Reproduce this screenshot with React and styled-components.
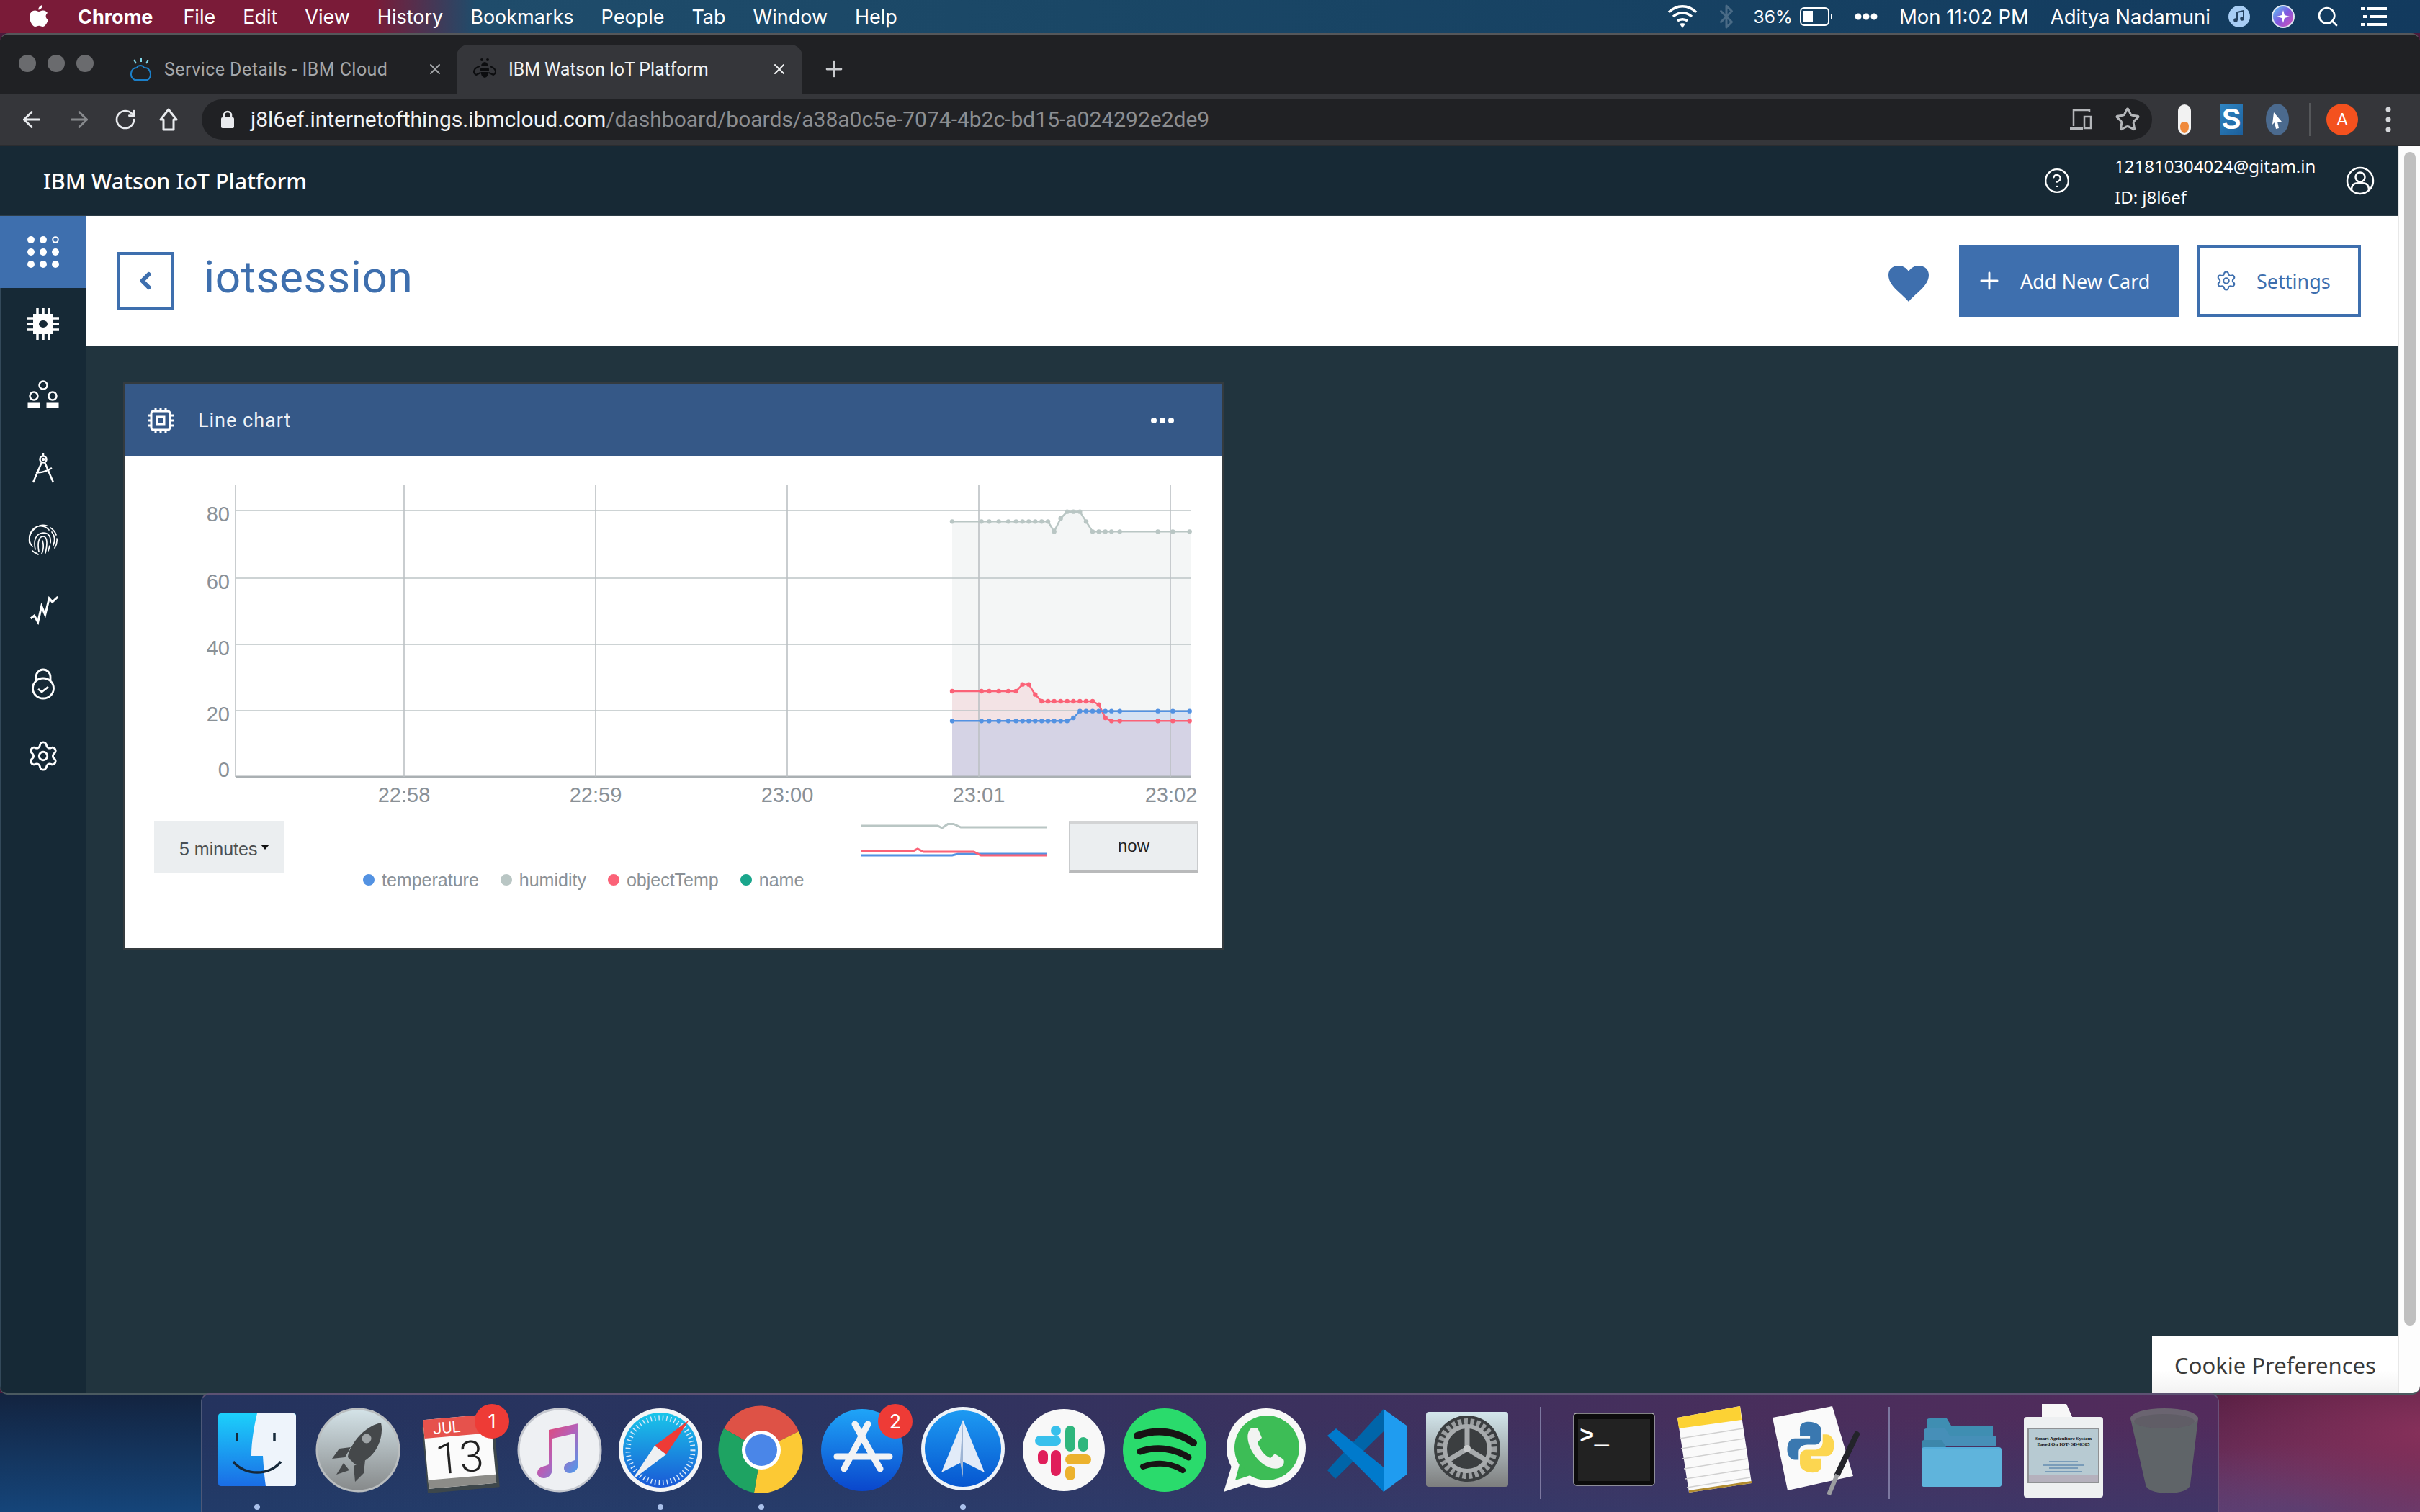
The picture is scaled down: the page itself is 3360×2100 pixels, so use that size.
import React from 'react'
import styled, { createGlobalStyle } from 'styled-components'
import { ArrowLeft, ArrowRight, RotateCw, Star, Plus, Settings, CircleHelp, Bluetooth, Search, X, ChevronLeft } from 'lucide-react'

const GlobalStyle = createGlobalStyle`
  html, body { margin: 0; padding: 0; background: #1d2b45; }
  * { box-sizing: border-box; }
  body { font-family: 'Liberation Sans', Arial, sans-serif; }
`

const Screen = styled.div`
  position: relative;
  width: 3360px;
  height: 2100px;
  overflow: hidden;
  display: flex;
  flex-direction: column;
  background:
    linear-gradient(180deg, #13233f 0, #15457a 100%) 0 1935px / 290px 165px no-repeat,
    radial-gradient(420px 170px at 3370px 1990px, #86305a 0%, transparent 100%),
    radial-gradient(300px 90px at 3200px 2095px, #4f4378 0%, transparent 100%),
    linear-gradient(180deg, #4b1a3c 1935px, #6a3a6c 2100px);
`

const MenuBar = styled.div`
  height: 46px;
  flex: none;
  display: flex;
  align-items: center;
  justify-content: space-between;
  padding: 0 46px 0 41px;
  color: #fff;
  font-family: Inter, sans-serif;
  font-size: 27px;
  background: linear-gradient(90deg, #7a1b38 0, #7a1b38 520px, #1f4c6b 660px, #1a4766 1500px, #123a5e 3360px);
`

const MenuList = styled.div`
  display: flex;
  align-items: center;
  gap: 38px;
`

const MenuTitle = styled.span`
  font-weight: ${p => (p.$bold ? 700 : 400)};
  margin-left: ${p => p.$left || 0}px;
  margin-right: ${p => p.$right || 0}px;
`

const StatusList = styled.div`
  display: flex;
  align-items: center;
  gap: ${p => p.$gap || 30}px;
  font-size: 27.5px;
`

const Percent = styled.span`
  font-size: 24.5px;
`

const Window = styled.div`
  flex: 1;
  display: flex;
  flex-direction: column;
  min-height: 0;
  border-top: 2px solid #55575a;
  border-radius: 12px 12px 10px 10px;
  overflow: hidden;
  background: #202124;
  box-shadow: 0 2px 0 #4b5a60;
`

const TabStrip = styled.div`
  height: 82px;
  flex: none;
  display: flex;
  align-items: flex-end;
  background: #202124;
`

const TrafficLights = styled.div`
  display: flex;
  gap: 16px;
  align-self: center;
  padding-left: 26px;
  width: 166px;
  transform: translateY(-1px);
`

const Light = styled.span`
  width: 24px;
  height: 24px;
  border-radius: 50%;
  background: #6a6b6e;
`

const Tab = styled.div`
  height: 68px;
  display: flex;
  align-items: center;
  width: ${p => p.$width}px;
  padding: 0 ${p => (p.$active ? 20 : 18)}px 0 ${p => (p.$active ? 22 : 14)}px;
  gap: 16px;
  font-family: Roboto, sans-serif;
  font-size: 25px;
  letter-spacing: ${p => (p.$active ? -0.1 : 0.45)}px;
  white-space: nowrap;
  color: ${p => (p.$active ? '#f1f3f4' : '#a4a7aa')};
  background: ${p => (p.$active ? '#35363a' : 'transparent')};
  border-radius: 16px 16px 0 0;
`

const TabLabel = styled.span`
  flex: 1;
`

const NewTab = styled.div`
  display: flex;
  align-items: center;
  height: 68px;
  padding-left: 27px;
  color: #c8cacd;
`

const Toolbar = styled.div`
  height: 73px;
  flex: none;
  display: flex;
  align-items: center;
  background: #35363a;
  color: #e8eaed;
  border-bottom: 2px solid #2c2d30;
`

const NavButtons = styled.div`
  width: 280px;
  flex: none;
  padding-left: 26px;
  display: flex;
  align-items: center;
  gap: 30px;
`

const UrlBar = styled.div`
  width: 2708px;
  height: 56px;
  flex: none;
  display: flex;
  align-items: center;
  background: #202124;
  border-radius: 28px;
  padding: 0 16px 0 26px;
  font-family: Roboto, sans-serif;
  font-size: 30px;
  color: #f1f3f4;
`

const UrlHost = styled.span`
  margin-left: 22px;
`

const UrlPath = styled.span`
  color: #8c8e91;
`

const UrlEnd = styled.div`
  margin-left: auto;
  display: flex;
  align-items: center;
  gap: 31px;
  color: #b4b6b9;
`

const ExtensionTray = styled.div`
  display: flex;
  align-items: center;
`

const TraySlot = styled.span`
  display: flex;
  margin-left: ${p => p.$left}px;
`

const ToolSep = styled.span`
  width: 2px;
  height: 46px;
  background: #55575a;
`

const Avatar = styled.span`
  width: 44px;
  height: 44px;
  border-radius: 50%;
  background: #f4511e;
  color: #fff;
  display: flex;
  align-items: center;
  justify-content: center;
  font-family: Roboto, sans-serif;
  font-size: 24px;
`

const ExtS = styled.span`
  width: 32px;
  height: 44px;
  background: linear-gradient(135deg, #2f86c4, #1c5f9b);
  color: #fff;
  display: flex;
  align-items: center;
  justify-content: center;
  font: 700 40px 'Liberation Sans', sans-serif;
`

const PageFrame = styled.div`
  flex: 1;
  min-height: 0;
  display: flex;
`

const PageBody = styled.div`
  flex: 1;
  min-width: 0;
  display: flex;
  flex-direction: column;
`

const ScrollTrack = styled.div`
  width: 30px;
  flex: none;
  background: #fdfdfd;
  border-left: 1px solid #e8e8e8;
  padding: 8px 6px 94px 7px;
  display: flex;
`

const ScrollThumb = styled.div`
  flex: 1;
  background: #c0c0c0;
  border-radius: 9px;
`

const AppHeader = styled.header`
  height: 97px;
  flex: none;
  display: flex;
  align-items: center;
  padding: 0 33px 0 60px;
  background: #172935;
  border-bottom: 2px solid #2c3c46;
  color: #fff;
`

const AppName = styled.div`
  font-family: 'Noto Sans', sans-serif;
  font-weight: 500;
  font-size: 30.5px;
  flex: 1;
`

const HelpSlot = styled.div`
  width: 99px;
  display: flex;
`

const UserInfo = styled.div`
  width: 321px;
  padding-top: 3px;
  font-family: 'Noto Sans', sans-serif;
  font-size: 24px;
  line-height: 43px;
`

const Workspace = styled.div`
  flex: 1;
  min-height: 0;
  display: flex;
`

const SideNav = styled.nav`
  width: 120px;
  flex: none;
  background: #162936;
  border-left: 2px solid #33495a;
`

const NavItem = styled.div`
  height: 100px;
  display: flex;
  align-items: center;
  justify-content: center;
  margin-left: -2px;
  background: ${p => (p.$active ? '#3e6fae' : 'transparent')};
  color: #fff;
`

const Main = styled.main`
  flex: 1;
  min-width: 0;
  background: #21343e;
  display: flex;
  flex-direction: column;
`

const PageHead = styled.div`
  height: 180px;
  flex: none;
  background: #fff;
  display: flex;
  align-items: center;
  padding: 0 52px 0 42px;
`

const BackButton = styled.div`
  width: 80px;
  height: 80px;
  border: 4px solid #3e6fae;
  color: #3e6fae;
  display: flex;
  align-items: center;
  justify-content: center;
`

const PageTitle = styled.h1`
  margin: -12px 0 0 41px;
  flex: 1;
  font-family: Roboto, sans-serif;
  font-weight: 400;
  font-size: 62px;
  letter-spacing: 0.6px;
  color: #3e6fae;
`

const HeartSlot = styled.div`
  display: flex;
  margin-right: 42px;
  margin-top: 8px;
`

const PrimaryButton = styled.div`
  width: 306px;
  height: 100px;
  background: #3e6fae;
  color: #fff;
  display: flex;
  align-items: center;
  gap: 24px;
  padding-left: 23px;
  font-family: 'Noto Sans', sans-serif;
  font-size: 27px;
`

const GhostButton = styled.div`
  width: 228px;
  height: 100px;
  margin-left: 24px;
  border: 4px solid #3e6fae;
  color: #3e6fae;
  display: flex;
  align-items: center;
  gap: 27px;
  padding-left: 22px;
  font-family: 'Noto Sans', sans-serif;
  font-size: 27px;
`

const Canvas = styled.div`
  flex: 1;
  padding: 54px;
  position: relative;
`

const Card = styled.section`
  width: 1522px;
  height: 782px;
  background: #fff;
  box-shadow: 0 0 0 3px #343b3f;
`

const CardHead = styled.div`
  height: 99px;
  display: flex;
  align-items: center;
  padding: 0 66px 0 30px;
  background: #355887;
  color: #eef2f7;
  font-family: Roboto, sans-serif;
  font-size: 27px;
  letter-spacing: 1px;
`

const CardTitle = styled.span`
  margin-left: 33px;
  flex: 1;
`

const MoreDots = styled.div`
  display: flex;
  gap: 4px;
`

const MoreDot = styled.span`
  width: 8px;
  height: 8px;
  border-radius: 50%;
  background: #fff;
`

const ChartSvg = styled.svg`
  display: block;
`

const AxisText = styled.text`
  font-family: 'Liberation Sans', sans-serif;
  font-size: 29px;
  fill: #8a9197;
`

const Controls = styled.div`
  height: 72px;
  display: flex;
  align-items: center;
  padding: 0 32px 0 40px;
`

const RangeButton = styled.div`
  width: 180px;
  height: 72px;
  background: #ebeef0;
  color: #4a4f53;
  display: flex;
  align-items: center;
  padding: 7px 0 0 35px;
  gap: 5px;
  font-size: 25px;
  white-space: nowrap;
`

const Caret = styled.span`
  width: 0;
  height: 0;
  border: 6px solid transparent;
  border-top: 7px solid #111;
  border-bottom: 0;
  margin-top: -6px;
`

const NowButton = styled.div`
  width: 180px;
  height: 72px;
  margin-left: 30px;
  background: #ebeef0;
  border: 2px solid #c9cbcd;
  border-top: 4px solid #d3d4d5;
  border-bottom: 4px solid #b9babb;
  color: #222;
  display: flex;
  align-items: center;
  justify-content: center;
  font-size: 24px;
  padding-bottom: 2px;
`

const MiniChart = styled.svg`
  margin-left: auto;
  align-self: flex-start;
  margin-top: 3px;
`

const Legend = styled.div`
  display: flex;
  align-items: center;
  height: 20px;
  padding-left: 330px;
  gap: 30px;
`

const LegendItem = styled.div`
  display: flex;
  align-items: center;
  gap: 10px;
  font-size: 25px;
  color: #8a9197;
  white-space: nowrap;
`

const LegendDot = styled.span`
  width: 16px;
  height: 16px;
  border-radius: 50%;
  background: ${p => p.$color};
`

const CookieTab = styled.div`
  position: absolute;
  right: 0;
  bottom: 0;
  width: 342px;
  height: 79px;
  background: linear-gradient(180deg, #ffffff 60%, #f2f2f2);
  color: #3a3a3a;
  display: flex;
  align-items: center;
  justify-content: center;
  font-family: 'Noto Sans', sans-serif;
  font-size: 31px;
`

const Dock = styled.div`
  position: relative;
  height: 165px;
  flex: none;
  margin: 0 279px;
  padding: 0 7px;
  display: flex;
  background:
    linear-gradient(180deg, rgba(30, 70, 120, 0) 20%, rgba(30, 75, 125, 0.35) 100%),
    linear-gradient(90deg, #24335e 0, #2b3460 30%, #3c315e 55%, #4a2e5c 80%, #532b5c 100%);
  border-top: 2px solid #5d5273;
  border-left: 1px solid #4d5878;
  border-right: 1px solid #6a5078;
  border-radius: 12px 12px 0 0;
`

const DockItem = styled.div`
  position: relative;
  width: 140px;
  flex: none;
  padding-top: 17px;
  display: flex;
  justify-content: center;
`

const DockDivider = styled.div`
  width: 64px;
  flex: none;
  display: flex;
  justify-content: center;
  padding: 17px 0 18px;
`

const DockLine = styled.span`
  width: 2px;
  background: #7c78a0;
`

const RunDot = styled.span`
  position: absolute;
  left: 50%;
  bottom: 3px;
  margin-left: -4px;
  width: 8px;
  height: 8px;
  border-radius: 50%;
  background: #a9c0ea;
`

const Badge = styled.span`
  position: absolute;
  right: 0;
  top: 13px;
  width: 48px;
  height: 48px;
  border-radius: 50%;
  background: #ee3b36;
  color: #fff;
  display: flex;
  align-items: center;
  justify-content: center;
  font-family: Inter, sans-serif;
  font-size: 27px;
`

const DockSvg = styled.svg`
  display: block;
  overflow: visible;
`

const IconText = styled.text`
  font-family: ${p => p.$font || 'Roboto, sans-serif'};
`

/* ---------- small drawn icons ---------- */

const AppleLogo = () => (
  <svg width="26" height="32" viewBox="0 0 26 32" fill="#fff">
    <path d="M18 0c.3 3-2.500 6.600-5.600 6.400C12 3.500 15 .3 18 0zM25 11c-3.500 2.200-3 7.500 1 9.500-1 3-4 9.500-7.500 9.500-2 0-3-1.300-5.300-1.300S10 30 8 30C4 30 0 22 0 16.500 0 10.500 4 7.500 7.500 7.500c2.300 0 4 1.500 5.500 1.500s3.500-1.700 6-1.500c2.500.2 4.800 1.300 6 3.500z" />
  </svg>
)

const WifiIcon = () => (
  <svg width="42" height="36" viewBox="0 0 42 36" fill="none" stroke="#fff" strokeWidth="3.500">
    <path d="M2 12c11-11 27-11 38 0M8 18c8-7 18-7 26 0M14 24c4-3 10-3 14 0" />
    <path d="M21 34l-4-6c2-1 6-1 8 0z" fill="#fff" stroke="none" />
  </svg>
)

const BatteryIcon = () => (
  <svg width="46" height="26" viewBox="0 0 46 26">
    <rect x="1" y="1" width="39" height="24" rx="5" fill="none" stroke="#fff" strokeWidth="2" />
    <rect x="5" y="5" width="13" height="16" fill="#fff" />
    <path d="M43 9c2 1 2 7 0 8z" fill="#fff" />
  </svg>
)

const StatusDots = () => (
  <svg width="32" height="10" viewBox="0 0 32 10" fill="#fff">
    <circle cx="5" cy="5" r="4.500" />
    <circle cx="16" cy="5" r="4.500" />
    <circle cx="27" cy="5" r="4.500" />
  </svg>
)

const MusicBadge = () => (
  <svg width="30" height="30" viewBox="0 0 30 30">
    <circle cx="15" cy="15" r="15" fill="#a8cdf4" />
    <path d="M12 20V9l9-2v11" fill="none" stroke="#24415f" strokeWidth="2" />
    <circle cx="10" cy="20" r="2.800" fill="#24415f" />
    <circle cx="19" cy="18" r="2.800" fill="#24415f" />
  </svg>
)

const SiriIcon = () => (
  <svg width="32" height="32" viewBox="0 0 32 32">
    <defs>
      <linearGradient id="siriG" x1="0" y1="0" x2="1" y2="1">
        <stop offset="0" stopColor="#5ad0f5" />
        <stop offset="0.5" stopColor="#7f58e0" />
        <stop offset="1" stopColor="#e04fb0" />
      </linearGradient>
    </defs>
    <circle cx="16" cy="16" r="15" fill="url(#siriG)" stroke="#dfe8f2" strokeWidth="2" />
    <path d="M16 7l2 7 7 2-7 2-2 7-2-7-7-2 7-2z" fill="#fff" />
  </svg>
)

const ListIcon = () => (
  <svg width="36" height="26" viewBox="0 0 36 26" fill="#fff">
    <rect x="0" y="0" width="5" height="4" />
    <rect x="9" y="0" width="27" height="4" />
    <rect x="3" y="11" width="5" height="4" />
    <rect x="12" y="11" width="24" height="4" />
    <rect x="0" y="22" width="5" height="4" />
    <rect x="9" y="22" width="27" height="4" />
  </svg>
)

const CloudFavicon = () => (
  <svg width="32" height="36" viewBox="0 0 32 36" fill="none" strokeWidth="2">
    <path d="M16 2v6M6 5l3 5M26 5l-3 5" stroke="#7fd6e8" />
    <path d="M7 33c-8-4-6-17 3-17 2-4 8-4 10 0 9-1 12 12 5 17z" stroke="#1b7fc8" />
  </svg>
)

const BeeFavicon = () => (
  <svg width="34" height="32" viewBox="0 0 34 32" fill="none">
    <ellipse cx="17" cy="17" rx="6" ry="11" fill="#0c0d0f" />
    <path d="M10 12c-9 3-10 9-5 12l6-3M24 12c9 3 10 9 5 12l-6-3" stroke="#0c0d0f" strokeWidth="2" />
    <circle cx="13" cy="3" r="2" fill="#0c0d0f" />
    <circle cx="21" cy="3" r="2" fill="#0c0d0f" />
    <path d="M10 13h14M10 19h14" stroke="#35363a" strokeWidth="2" />
  </svg>
)

const HomeIcon = () => (
  <svg width="28" height="34" viewBox="0 0 28 34" fill="none" stroke="#e8eaed" strokeWidth="3">
    <path d="M14 3L3 17h4v14h14V17h4z" strokeLinejoin="round" />
  </svg>
)

const LockIcon = () => (
  <svg width="20" height="26" viewBox="0 0 20 26">
    <path d="M5 11V7a5 5 0 0110 0v4" fill="none" stroke="#e8eaed" strokeWidth="2.500" />
    <rect x="1" y="10" width="18" height="15" rx="2" fill="#e8eaed" />
  </svg>
)

const DevicesIcon = () => (
  <svg width="32" height="30" viewBox="0 0 32 30" fill="none" stroke="#b4b6b9" strokeWidth="2.500">
    <path d="M28 4V2H6v22" />
    <path d="M1 27h18" strokeWidth="4" />
    <rect x="21" y="11" width="9" height="16" />
  </svg>
)

const PillExtension = () => (
  <svg width="20" height="44" viewBox="0 0 20 44">
    <rect x="1" y="1" width="18" height="42" rx="9" fill="#f2f2f2" />
    <path d="M4 24a6 9 0 0012 0c0-6-3-7-6-7s-6 1-6 7z" fill="#f08a3c" transform="translate(0 8)" />
  </svg>
)

const CursorExtension = () => (
  <svg width="32" height="44" viewBox="0 0 32 44">
    <ellipse cx="16" cy="22" rx="16" ry="22" fill="#4b6a8e" />
    <path d="M11 12l11 13h-6l2 9-4 1-2-9-3 3z" fill="#fff" />
  </svg>
)

const KebabIcon = () => (
  <svg width="8" height="36" viewBox="0 0 8 36" fill="#d5d7da">
    <circle cx="4" cy="4" r="3.500" />
    <circle cx="4" cy="18" r="3.500" />
    <circle cx="4" cy="32" r="3.500" />
  </svg>
)

const UserIcon = () => (
  <svg width="40" height="40" viewBox="0 0 40 40" fill="none" stroke="#fff" strokeWidth="2.500">
    <circle cx="20" cy="20" r="18" />
    <circle cx="20" cy="15" r="6.500" />
    <path d="M8 33c0-9 5-10 12-10s12 1 12 10" />
  </svg>
)

const HeartIcon = () => (
  <svg width="56" height="50" viewBox="0 0 56 50" fill="#3e6fae">
    <path d="M28 50C18 38 0 28 0 13 0 5 6 0 14 0c6 0 11 3 14 8 3-5 8-8 14-8 8 0 14 5 14 13 0 15-18 25-28 37z" />
  </svg>
)

const GridNav = () => (
  <svg width="44" height="44" viewBox="0 0 44 44" fill="#fff">
    {[5, 22, 39].map(y =>
      [5, 22, 39].map(x =>
        x === 39 && y === 5 ? (
          <circle key={x + '-' + y} cx={x} cy={y} r="3.800" fill="none" stroke="#fff" strokeWidth="2" />
        ) : (
          <circle key={x + '-' + y} cx={x} cy={y} r="5" />
        )
      )
    )}
  </svg>
)

const ChipNav = () => (
  <svg width="44" height="44" viewBox="0 0 44 44">
    <rect x="8" y="8" width="28" height="28" fill="#fff" />
    <path d="M14 0v44M22 0v44M30 0v44M0 14h44M0 22h44M0 30h44" stroke="#fff" strokeWidth="3.500" />
    <path d="M0 18h8M0 26h8M36 18h8M36 26h8M18 0v8M26 0v8M18 36v8M26 36v8" stroke="#162936" strokeWidth="3" />
    <ellipse cx="22" cy="22" rx="6" ry="5" fill="#162936" />
  </svg>
)

const GroupNav = () => (
  <svg width="44" height="44" viewBox="0 0 44 44" fill="none" stroke="#fff" strokeWidth="2.500">
    <circle cx="22" cy="7" r="5.500" />
    <circle cx="9" cy="22" r="5.500" />
    <circle cx="35" cy="22" r="5.500" />
    <rect x="1" y="32" width="16" height="6" fill="#fff" strokeWidth="1" />
    <rect x="27" y="32" width="16" height="6" fill="#fff" strokeWidth="1" />
  </svg>
)

const CompassNav = () => (
  <svg width="44" height="44" viewBox="0 0 44 44" fill="none" stroke="#fff" strokeWidth="2.500">
    <circle cx="22" cy="10" r="4.500" />
    <path d="M22 1v4M20 14L8 42M24 14l12 28M12 28c8 1 14-1 22-6" />
    <circle cx="22" cy="10" r="1" fill="#fff" />
  </svg>
)

const FingerprintNav = () => (
  <svg width="44" height="44" viewBox="0 0 44 44" fill="none" stroke="#fff" strokeWidth="1.700" strokeLinecap="round">
    <path d="M3 26A19 20 0 0 1 12 5M17 2A20 20 0 0 1 27 2M32 5A19 20 0 0 1 40 15M41 20A20 20 0 0 1 38 33" />
    <path d="M7 31A15 16 0 0 1 30 8M34 11A15 16 0 0 1 36 29" />
    <path d="M11 35C8 22 12 13 22 12 30 12 33 18 32 26M31 30L29 37" />
    <path d="M16 38C14 28 15 17 22 17 28 17 28 28 25 40" />
    <path d="M21 23C23 29 22 36 20 41" />
    <path d="M7 37L11 40M12 40L15 42" />
  </svg>
)

const TrendNav = () => (
  <svg width="44" height="44" viewBox="0 0 44 44" fill="none" stroke="#fff" strokeWidth="3">
    <path d="M4.700 31L9.700 27 14.700 36 19.700 14 24.700 26 30.300 3 34.700 8 42.300 1" />
  </svg>
)

const LockNav = () => (
  <svg width="44" height="44" viewBox="0 0 44 44" fill="none" stroke="#fff" strokeWidth="2.800">
    <path d="M12 17v-5a10 10 0 0120 0v5" />
    <ellipse cx="22" cy="28" rx="14.500" ry="14" />
    <path d="M15 29l5 4 9-7" />
  </svg>
)

const ChipCard = () => (
  <svg width="38" height="38" viewBox="0 0 38 38" fill="none" stroke="#fff">
    <rect x="6" y="6" width="26" height="26" rx="3" strokeWidth="3" />
    <rect x="14" y="14" width="10" height="10" strokeWidth="3" />
    <path d="M12 1v5M19 1v5M26 1v5M12 32v5M19 32v5M26 32v5M1 12h5M1 19h5M1 26h5M32 12h5M32 19h5M32 26h5" strokeWidth="3" />
  </svg>
)

/* ---------- chart ---------- */

const px = zx => 1280 + zx / 3
const py = zy => 660 + zy / 3

const humidity = [[126,193],[248,193],[280,193],[320,193],[360,193],[392,193],[419,193],[445,193],[472,193],[499,193],[525,193],[551,235],[578,180],[605,152],[631,152],[658,152],[684,193],[711,235],[737,235],[764,235],[790,235],[824,235],[983,235],[1045,235],[1115,235]]
const objectTemp = [[126,900],[248,900],[280,900],[320,900],[360,900],[392,900],[419,872],[445,872],[472,914],[499,942],[525,942],[551,942],[578,942],[605,942],[631,942],[658,942],[684,942],[711,942],[737,956],[764,1011],[790,1024],[824,1024],[983,1024],[1045,1024],[1115,1024]]
const temperature = [[126,1024],[248,1024],[280,1024],[320,1024],[360,1024],[392,1024],[419,1024],[445,1024],[472,1024],[499,1024],[525,1024],[551,1024],[578,1024],[605,1024],[631,1011],[658,983],[684,983],[711,983],[737,983],[764,983],[790,983],[824,983],[983,983],[1045,983],[1115,983]]

const series = [
  { name: 'humidity', color: '#b9c6c4', fill: 'rgba(185,198,196,0.16)', data: humidity },
  { name: 'objectTemp', color: '#fb6277', fill: 'rgba(240,130,140,0.16)', data: objectTemp },
  { name: 'temperature', color: '#5392e2', fill: 'rgba(83,146,226,0.19)', data: temperature },
]

const gridY = [[709, '80'], [803, '60'], [895, '40'], [987, '20'], [1079, '0']]
const gridX = [[561, '22:58'], [827, '22:59'], [1093, '23:00'], [1359, '23:01'], [1625, '23:02']]

const points = d => d.map(([x, y]) => `${px(x)},${py(y)}`).join(' ')

const LineChart = () => (
  <ChartSvg width="1522" height="507" viewBox="174 633 1522 507">
    {series.map(s => (
      <polygon key={s.name} fill={s.fill} points={`${points(s.data)} ${px(1122)},${py(s.data[s.data.length - 1][1])} ${px(1122)},1079 ${px(126)},1079`} />
    ))}
    {gridY.map(([y, label]) => (
      <g key={label}>
        <line x1="327" x2="1654" y1={y} y2={y} stroke={label === '0' ? '#aab0b3' : '#bcc4c6'} strokeWidth={label === '0' ? 3 : 1.600} />
        <AxisText x="319" y={label === '0' ? y : y + 15} textAnchor="end">{label}</AxisText>
      </g>
    ))}
    <line x1="327" x2="327" y1="674" y2="1079" stroke="#bcc1c4" strokeWidth="1.600" />
    {gridX.map(([x, label]) => (
      <g key={label}>
        <line x1={x} x2={x} y1="674" y2="1079" stroke="#bcc1c4" strokeWidth="1.600" />
        <AxisText x={label === '23:02' ? x + 1 : x} y="1114" textAnchor="middle">{label}</AxisText>
      </g>
    ))}
    {series.map(s => (
      <g key={s.name}>
        <polyline fill="none" stroke={s.color} strokeWidth="2.500" points={points(s.data)} />
        {s.data.map(([x, y]) => (
          <circle key={x} cx={px(x)} cy={py(y)} r="3.200" fill={s.color} />
        ))}
      </g>
    ))}
  </ChartSvg>
)

const Overview = () => (
  <MiniChart width="258" height="48" viewBox="0 0 258 48">
    <path d="M0 4H106L112 7L120 1.500H128L138 6H258" fill="none" stroke="#b9c6c4" strokeWidth="3" />
    <path d="M0 45H126L134 43H258" fill="none" stroke="#5392e2" strokeWidth="3" />
    <path d="M0 39H72L78 36L86 40H156L166 45H258" fill="none" stroke="#fb6277" strokeWidth="3" />
  </MiniChart>
)

/* ---------- dock icons, each on a 120 box ---------- */

const FinderIcon = () => (
  <DockSvg width="120" height="120" viewBox="0 0 120 120">
    <defs>
      <linearGradient id="finderL" x1="0" y1="0" x2="0" y2="1">
        <stop offset="0" stopColor="#1cd0fb" />
        <stop offset="1" stopColor="#1a6de6" />
      </linearGradient>
    </defs>
    <rect x="6" y="9" width="108" height="101" rx="4" fill="url(#finderL)" />
    <path d="M60 9H110a4 4 0 014 4v93a4 4 0 01-4 4H72C70 96 69 84 68 68H52C52 48 56 26 60 9z" fill="#eef4fb" />
    <path d="M32 36v12M84 36v12" stroke="#16293a" strokeWidth="3.500" />
    <path d="M27 76C42 96 78 96 93 76" fill="none" stroke="#16293a" strokeWidth="3.500" />
  </DockSvg>
)

const LaunchpadIcon = () => (
  <DockSvg width="120" height="120" viewBox="0 0 120 120">
    <defs>
      <linearGradient id="lpG" x1="0" y1="0" x2="0" y2="1">
        <stop offset="0" stopColor="#d4e3e8" />
        <stop offset="1" stopColor="#86898a" />
      </linearGradient>
    </defs>
    <circle cx="60" cy="60" r="57" fill="url(#lpG)" stroke="#b9bdbf" strokeWidth="3" />
    <g fill="#45484a">
      <path d="M92 22C78 25 62 36 52 54c-4 6-6 12-6 16l10 10c4 0 10-3 16-7C88 62 96 40 92 22z" />
      <path d="M50 56L34 58 24 72l18-2zM70 74l-2 18-12 12-2-22zM40 78l-10 16 18-6z" />
    </g>
    <circle cx="72" cy="44" r="6.500" fill="#9fa4a6" />
  </DockSvg>
)

const CalendarIcon = () => (
  <DockSvg width="120" height="120" viewBox="0 0 120 120">
    <g transform="rotate(-5 60 60)">
      <rect x="12" y="24" width="100" height="92" fill="#3d474b" />
      <rect x="14" y="14" width="94" height="96" fill="#fbfbfb" />
      <rect x="14" y="98" width="94" height="12" fill="#8c8c88" />
      <rect x="14" y="14" width="94" height="26" fill="#e6524c" />
      <IconText x="46" y="35" textAnchor="middle" fontSize="22" fill="#fff">JUL</IconText>
      <IconText x="60" y="91" textAnchor="middle" fontSize="60" fontWeight="300" fill="#222">13</IconText>
    </g>
  </DockSvg>
)

const MusicIcon = () => (
  <DockSvg width="120" height="120" viewBox="0 0 120 120">
    <defs>
      <linearGradient id="noteG" x1="0" y1="0" x2="1" y2="1">
        <stop offset="0" stopColor="#f4405e" />
        <stop offset="0.5" stopColor="#b660b8" />
        <stop offset="1" stopColor="#3ea4f4" />
      </linearGradient>
    </defs>
    <circle cx="60" cy="60" r="57" fill="#eef0f3" stroke="#c5c8cf" strokeWidth="3" />
    <path fill="url(#noteG)" d="M45 32l41-9v56c0 8-6 13-12 13-5 0-8-3-8-7 0-6 5-8 10-9l5-2V37L50 44v42c0 8-6 13-12 13-5 0-9-3-9-7 0-6 5-9 11-10l5-2z" />
  </DockSvg>
)

const SafariIcon = () => (
  <DockSvg width="120" height="120" viewBox="0 0 120 120">
    <defs>
      <linearGradient id="safG" x1="0" y1="0" x2="0" y2="1">
        <stop offset="0" stopColor="#1ac6ea" />
        <stop offset="1" stopColor="#1a58d6" />
      </linearGradient>
    </defs>
    <circle cx="60" cy="60" r="58" fill="#f4f5f6" />
    <circle cx="60" cy="60" r="52" fill="url(#safG)" />
    <circle cx="60" cy="60" r="45" fill="none" stroke="#d8e8f8" strokeWidth="7" strokeDasharray="1.500 4" />
    <path d="M100 18L68 66 52 54z" fill="#ee3b36" />
    <path d="M20 102L52 54 68 66z" fill="#eef0f2" />
  </DockSvg>
)

const ChromeIcon = () => (
  <DockSvg width="120" height="120" viewBox="0 0 120 120">
    <path d="M60 60L112 34A58 60 0 008 30z" fill="#de5246" />
    <path d="M60 60L112 34A58 60 0 0150 119z" fill="#fcc934" />
    <path d="M60 60L50 119A58 60 0 018 30z" fill="#1ea362" />
    <circle cx="60" cy="60" r="27" fill="#fff" />
    <circle cx="60" cy="60" r="22" fill="#4a86e8" />
  </DockSvg>
)

const AppStoreIcon = () => (
  <DockSvg width="120" height="120" viewBox="0 0 120 120">
    <defs>
      <linearGradient id="asG" x1="0" y1="0" x2="0" y2="1">
        <stop offset="0" stopColor="#1fa5f8" />
        <stop offset="1" stopColor="#0a46cc" />
      </linearGradient>
    </defs>
    <circle cx="60" cy="60" r="57" fill="url(#asG)" />
    <path d="M50 24l35 62M68 24L35 86M25 69h73" stroke="#f1f3f5" strokeWidth="9" strokeLinecap="round" fill="none" />
  </DockSvg>
)

const SparkIcon = () => (
  <DockSvg width="120" height="120" viewBox="0 0 120 120">
    <defs>
      <linearGradient id="spG" x1="0" y1="0" x2="0" y2="1">
        <stop offset="0" stopColor="#1d9af2" />
        <stop offset="1" stopColor="#0656d0" />
      </linearGradient>
    </defs>
    <circle cx="60" cy="58" r="58" fill="#eef3f8" />
    <circle cx="60" cy="58" r="53" fill="url(#spG)" />
    <path d="M60 18L90 91 60 76 30 91z" fill="#e2ebf8" />
    <path d="M60 18V98L56 76z" fill="#9db4d4" />
  </DockSvg>
)

const SlackIcon = () => (
  <DockSvg width="120" height="120" viewBox="0 0 120 120">
    <circle cx="60" cy="60" r="57" fill="#f8f8f8" />
    <rect x="20" y="40" width="36" height="14" rx="7" fill="#38c0ec" />
    <rect x="42" y="26" width="14" height="14" rx="7" fill="#38c0ec" />
    <rect x="62" y="26" width="14" height="36" rx="7" fill="#2eb67d" />
    <rect x="80" y="42" width="14" height="20" rx="7" fill="#2eb67d" />
    <rect x="62" y="66" width="36" height="14" rx="7" fill="#ecb22e" />
    <rect x="62" y="82" width="14" height="20" rx="7" fill="#ecb22e" />
    <rect x="42" y="60" width="14" height="36" rx="7" fill="#e01e5a" />
    <rect x="24" y="60" width="14" height="20" rx="7" fill="#e01e5a" />
  </DockSvg>
)

const SpotifyIcon = () => (
  <DockSvg width="120" height="120" viewBox="0 0 120 120">
    <circle cx="60" cy="60" r="58" fill="#2adb6c" />
    <path d="M22 40C50 30 78 34 100 50" fill="none" stroke="#171414" strokeWidth="10" strokeLinecap="round" />
    <path d="M26 62C50 54 74 58 93 70" fill="none" stroke="#171414" strokeWidth="9" strokeLinecap="round" />
    <path d="M30 83C50 76 70 78 85 88" fill="none" stroke="#171414" strokeWidth="8" strokeLinecap="round" />
  </DockSvg>
)

const WhatsAppIcon = () => (
  <DockSvg width="120" height="120" viewBox="0 0 120 120">
    <circle cx="61" cy="57" r="55" fill="#f7f8f7" />
    <path d="M13 82L2 118l36-12z" fill="#f7f8f7" />
    <circle cx="62" cy="57" r="45" fill="#3dbd56" />
    <path d="M24 80L18 102l24-8z" fill="#3dbd56" />
    <path d="M36 30c-6 4-8 14-2 28 8 18 26 32 40 28 6-2 8-8 6-12L68 66l-6 6c-8-2-16-14-18-22l6-6-6-14z" fill="#f2f3f2" transform="translate(5 -1)" />
  </DockSvg>
)

const VsCodeIcon = () => (
  <DockSvg width="120" height="120" viewBox="0 0 120 120">
    <path d="M84 3V34L17 100 6 88z" fill="#0065a9" />
    <path d="M6 40L18 30 84 84V118z" fill="#007acc" />
    <path d="M84 3L116 26V94L84 118z" fill="#1f9cf0" />
  </DockSvg>
)

const SystemPrefsIcon = () => (
  <DockSvg width="120" height="120" viewBox="0 0 120 120">
    <defs>
      <linearGradient id="prefG" x1="0" y1="0" x2="0" y2="1">
        <stop offset="0" stopColor="#d3e6ec" />
        <stop offset="1" stopColor="#7d7e7e" />
      </linearGradient>
    </defs>
    <rect x="3" y="7" width="114" height="104" rx="4" fill="url(#prefG)" />
    <circle cx="60" cy="58" r="46" fill="#3b3e40" />
    <circle cx="60" cy="58" r="37" fill="none" stroke="#9a9d9f" strokeWidth="10" strokeDasharray="5 3.500" />
    <circle cx="60" cy="58" r="31" fill="none" stroke="#a7aaac" strokeWidth="6" />
    <path d="M60 58V28M60 58L34 74M60 58l26 16" stroke="#a7aaac" strokeWidth="7" />
    <circle cx="60" cy="58" r="5" fill="#c7c9ca" />
  </DockSvg>
)

const TerminalIcon = () => (
  <DockSvg width="120" height="120" viewBox="0 0 120 120">
    <rect x="4" y="9" width="112" height="100" rx="4" fill="#0c0c0c" stroke="#a9aaab" strokeWidth="1.500" />
    <rect x="10" y="17" width="100" height="86" fill="#222" />
    <IconText x="12" y="50" fontSize="34" fill="#fff" $font="'Liberation Mono', monospace" fontWeight="700">&gt;_</IconText>
  </DockSvg>
)

const NotesIcon = () => (
  <DockSvg width="120" height="120" viewBox="0 0 120 120">
    <path d="M8 15L95 -1 111 106 24 119z" fill="#fafafa" />
    <path d="M24 119L111 106 111 103 24 116z" fill="#b08a2e" />
    <path d="M8 15L95 -1 97 18 10 30z" fill="#fcd234" />
    <path d="M11 44l88-14M13 58l88-14M15 72l88-14M17 86l88-14M19 100l88-14M21 112l88-14" stroke="#d0d0d0" strokeWidth="1.500" />
  </DockSvg>
)

const PythonIcon = () => (
  <DockSvg width="120" height="120" viewBox="0 0 120 120">
    <path d="M0 15L83 -1 112 96 21 116z" fill="#fafafa" />
    <g transform="translate(4.600 1.400) scale(0.88)">
      <path d="M52 22c-14 0-14 8-14 14v8h16v4H30c-8 0-12 8-12 18s6 16 12 16h6V70c0-8 6-12 14-12h12c6 0 10-6 10-10V36c0-8-8-14-20-14z" fill="#3a78b0" />
      <path d="M58 102c14 0 14-8 14-14v-8H56v-4h24c8 0 12-8 12-18S86 42 80 42h-6v12c0 8-6 12-14 12H48c-6 0-10 6-10 10v12c0 8 8 14 20 14z" fill="#fcd650" />
    </g>
    <path d="M117 38L90 94" stroke="#23242a" strokeWidth="8" strokeLinecap="round" />
    <path d="M90 94L78 122" stroke="#9b9da0" strokeWidth="6" />
  </DockSvg>
)

const FolderIcon = () => (
  <DockSvg width="120" height="120" viewBox="0 0 120 120">
    <path d="M10 20a4 4 0 014-4h24l6 10h58v14H10z" fill="#3f8eb2" />
    <path d="M6 34a4 4 0 014-4h26l6 10h64v14H6z" fill="#468fb8" />
    <path d="M3 50a4 4 0 014-4h24l6 10h74v20H3z" fill="#3c87ab" />
    <rect x="3" y="56" width="111" height="55" rx="4" fill="#55afdc" />
    <rect x="3" y="58" width="111" height="53" rx="4" fill="#5fb4dc" />
  </DockSvg>
)

const DocumentIcon = () => (
  <DockSvg width="120" height="120" viewBox="0 0 120 120">
    <path d="M30 -4H64L74 18H30z" fill="#f7f7f7" />
    <rect x="5" y="14" width="110" height="112" rx="4" fill="#eef0f1" />
    <rect x="11" y="30" width="98" height="75" fill="#b7cad2" stroke="#8f9194" strokeWidth="2" />
    <rect x="12" y="94" width="96" height="10" fill="#b5b1bd" />
    <IconText x="60" y="46" textAnchor="middle" fontSize="7" fontWeight="700" fill="#111" $font="'Liberation Serif', serif">Smart Agriculture System</IconText>
    <IconText x="60" y="54" textAnchor="middle" fontSize="7" fontWeight="700" fill="#111" $font="'Liberation Serif', serif">Based On IOT- SB48305</IconText>
    <path d="M40 76h40M32 81h56M40 85h40M34 90h52" stroke="#3c6ea0" strokeWidth="1.200" />
  </DockSvg>
)

const TrashIcon = () => (
  <DockSvg width="120" height="120" viewBox="0 0 120 120">
    <path d="M13 16c0-16 94-16 94 0l-11 92c-2 16-60 16-62 0z" fill="#5f6468" />
    <ellipse cx="60" cy="16" rx="47" ry="14" fill="#6a6470" />
    <ellipse cx="60" cy="20" rx="42" ry="10" fill="#55555c" opacity="0.5" />
  </DockSvg>
)

const dockApps = [
  { key: 'finder', Icon: FinderIcon, running: true },
  { key: 'launchpad', Icon: LaunchpadIcon },
  { key: 'calendar', Icon: CalendarIcon, badge: 1 },
  { key: 'music', Icon: MusicIcon },
  { key: 'safari', Icon: SafariIcon, running: true },
  { key: 'chrome', Icon: ChromeIcon, running: true },
  { key: 'appstore', Icon: AppStoreIcon, badge: 2 },
  { key: 'spark', Icon: SparkIcon, running: true },
  { key: 'slack', Icon: SlackIcon },
  { key: 'spotify', Icon: SpotifyIcon },
  { key: 'whatsapp', Icon: WhatsAppIcon },
  { key: 'vscode', Icon: VsCodeIcon },
  { key: 'prefs', Icon: SystemPrefsIcon },
  { divider: true, key: 'd1' },
  { key: 'terminal', Icon: TerminalIcon },
  { key: 'notes', Icon: NotesIcon },
  { key: 'python', Icon: PythonIcon },
  { divider: true, key: 'd2' },
  { key: 'folder', Icon: FolderIcon },
  { key: 'document', Icon: DocumentIcon },
  { key: 'trash', Icon: TrashIcon },
]

const navIcons = [
  <GridNav />,
  <ChipNav />,
  <GroupNav />,
  <CompassNav />,
  <FingerprintNav />,
  <TrendNav />,
  <LockNav />,
  <Settings size={46} strokeWidth={1.5} />,
]

const legend = [
  ['temperature', '#5392e2'],
  ['humidity', '#b9c6c4'],
  ['objectTemp', '#fb6277'],
  ['name', '#1aa68c'],
]

export default function App() {
  return (
    <Screen>
      <GlobalStyle />
      <MenuBar>
        <MenuList>
          <AppleLogo />
          <MenuTitle $bold $left={3} $right={4}>Chrome</MenuTitle>
          {['File', 'Edit', 'View', 'History', 'Bookmarks', 'People', 'Tab', 'Window', 'Help'].map(m => (
            <MenuTitle key={m}>{m}</MenuTitle>
          ))}
        </MenuList>
        <StatusList>
          <WifiIcon />
          <TraySlot $left={-8}><Bluetooth size={36} color="#4a6b86" /></TraySlot>
          <TraySlot $left={-10}>
            <StatusList $gap={10}>
              <Percent>36%</Percent>
              <BatteryIcon />
            </StatusList>
          </TraySlot>
          <StatusDots />
          <span>Mon 11:02 PM</span>
          <MenuTitle $right={-5}>Aditya Nadamuni</MenuTitle>
          <MusicBadge />
          <SiriIcon />
          <Search size={32} />
          <ListIcon />
        </StatusList>
      </MenuBar>

      <Window>
        <TabStrip>
          <TrafficLights>
            <Light />
            <Light />
            <Light />
          </TrafficLights>
          <Tab $width={468}>
            <CloudFavicon />
            <TabLabel>Service Details - IBM Cloud</TabLabel>
            <X size={24} />
          </Tab>
          <Tab $width={480} $active>
            <BeeFavicon />
            <TabLabel>IBM Watson IoT Platform</TabLabel>
            <X size={24} />
          </Tab>
          <NewTab>
            <Plus size={34} />
          </NewTab>
        </TabStrip>

        <Toolbar>
          <NavButtons>
            <ArrowLeft size={36} />
            <ArrowRight size={36} color="#87898c" />
            <RotateCw size={32} />
            <HomeIcon />
          </NavButtons>
          <UrlBar>
            <LockIcon />
            <UrlHost>j8l6ef.internetofthings.ibmcloud.com</UrlHost>
            <UrlPath>/dashboard/boards/a38a0c5e-7074-4b2c-bd15-a024292e2de9</UrlPath>
            <UrlEnd>
              <DevicesIcon />
              <Star size={36} />
            </UrlEnd>
          </UrlBar>
          <ExtensionTray>
            <TraySlot $left={35}><PillExtension /></TraySlot>
            <TraySlot $left={39}><ExtS>S</ExtS></TraySlot>
            <TraySlot $left={32}><CursorExtension /></TraySlot>
            <TraySlot $left={28}><ToolSep /></TraySlot>
            <TraySlot $left={22}><Avatar>A</Avatar></TraySlot>
            <TraySlot $left={38}><KebabIcon /></TraySlot>
          </ExtensionTray>
        </Toolbar>

        <PageFrame>
          <PageBody>
            <AppHeader>
              <AppName>IBM Watson IoT Platform</AppName>
              <HelpSlot>
                <CircleHelp size={38} strokeWidth={1.5} />
              </HelpSlot>
              <UserInfo>
                <div>121810304024@gitam.in</div>
                <div>ID: j8l6ef</div>
              </UserInfo>
              <UserIcon />
            </AppHeader>
            <Workspace>
              <SideNav>
                {navIcons.map((icon, i) => (
                  <NavItem key={i} $active={i === 0}>{icon}</NavItem>
                ))}
              </SideNav>
              <Main>
                <PageHead>
                  <BackButton>
                    <ChevronLeft size={36} strokeWidth={4} />
                  </BackButton>
                  <PageTitle>iotsession</PageTitle>
                  <HeartSlot>
                    <HeartIcon />
                  </HeartSlot>
                  <PrimaryButton>
                    <Plus size={38} strokeWidth={1.8} />
                    <span>Add New Card</span>
                  </PrimaryButton>
                  <GhostButton>
                    <Settings size={30} strokeWidth={1.6} />
                    <span>Settings</span>
                  </GhostButton>
                </PageHead>
                <Canvas>
                  <Card>
                    <CardHead>
                      <ChipCard />
                      <CardTitle>Line chart</CardTitle>
                      <MoreDots>
                        <MoreDot />
                        <MoreDot />
                        <MoreDot />
                      </MoreDots>
                    </CardHead>
                    <LineChart />
                    <Controls>
                      <RangeButton>
                        5 minutes
                        <Caret />
                      </RangeButton>
                      <Overview />
                      <NowButton>now</NowButton>
                    </Controls>
                    <Legend>
                      {legend.map(([name, color]) => (
                        <LegendItem key={name}>
                          <LegendDot $color={color} />
                          {name}
                        </LegendItem>
                      ))}
                    </Legend>
                  </Card>
                  <CookieTab>Cookie Preferences</CookieTab>
                </Canvas>
              </Main>
            </Workspace>
          </PageBody>
          <ScrollTrack>
            <ScrollThumb />
          </ScrollTrack>
        </PageFrame>
      </Window>

      <Dock>
        {dockApps.map(app =>
          app.divider ? (
            <DockDivider key={app.key}>
              <DockLine />
            </DockDivider>
          ) : (
            <DockItem key={app.key}>
              <app.Icon />
              {app.badge && <Badge>{app.badge}</Badge>}
              {app.running && <RunDot />}
            </DockItem>
          )
        )}
      </Dock>
    </Screen>
  )
}
